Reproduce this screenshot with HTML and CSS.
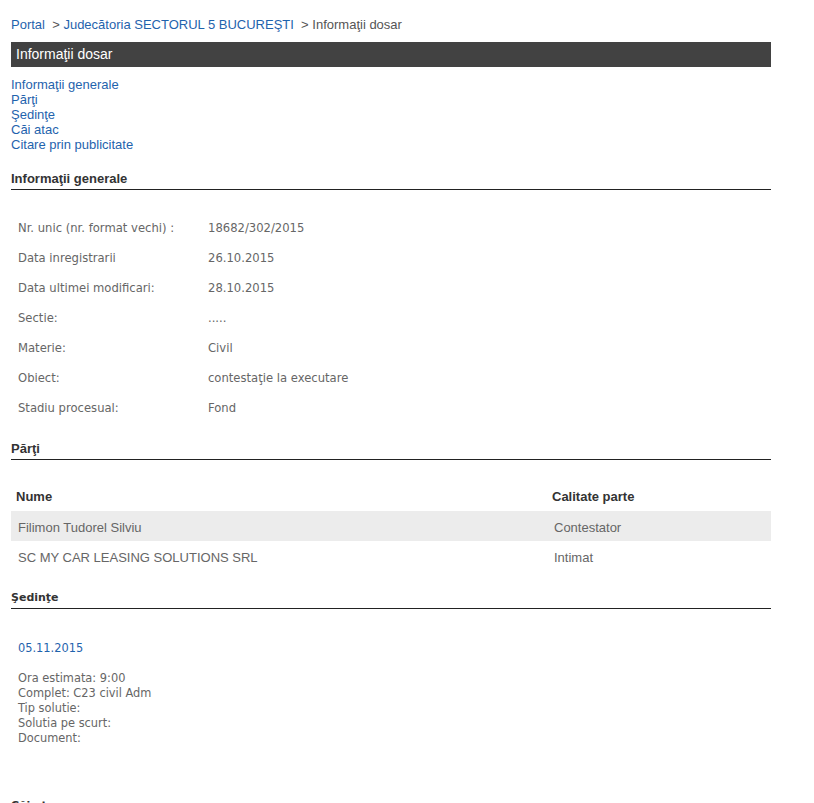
FILE: index.html
```html
<!DOCTYPE html>
<html lang="ro">
<head>
<meta charset="utf-8">
<title>Informaţii dosar</title>
<link rel="stylesheet" href="styles.css">
</head>
<body>
<div class="page">
  <div class="breadcrumb">
    <a href="#">Portal</a>&nbsp; &gt; <a href="#">Judecătoria SECTORUL 5 BUCUREŞTI</a>&nbsp; &gt; <span class="current">Informaţii dosar</span>
  </div>
  <div class="titlebar">Informaţii dosar</div>
  <ul class="nav">
    <li><a href="#">Informaţii generale</a></li>
    <li><a href="#">Părţi</a></li>
    <li><a href="#">Şedinţe</a></li>
    <li><a href="#">Căi atac</a></li>
    <li><a href="#">Citare prin publicitate</a></li>
  </ul>

  <h2 class="section-title">Informaţii generale</h2>
  <table class="info">
    <tr><td class="lbl">Nr. unic (nr. format vechi) :</td><td>18682/302/2015</td></tr>
    <tr><td class="lbl">Data inregistrarii</td><td>26.10.2015</td></tr>
    <tr><td class="lbl">Data ultimei modificari:</td><td>28.10.2015</td></tr>
    <tr><td class="lbl">Sectie:</td><td>.....</td></tr>
    <tr><td class="lbl">Materie:</td><td>Civil</td></tr>
    <tr><td class="lbl">Obiect:</td><td>contestaţie la executare</td></tr>
    <tr><td class="lbl">Stadiu procesual:</td><td>Fond</td></tr>
  </table>

  <h2 class="section-title after-info">Părţi</h2>
  <table class="parti">
    <thead>
      <tr><th class="c-nume">Nume</th><th>Calitate parte</th></tr>
    </thead>
    <tbody>
      <tr class="alt"><td>Filimon Tudorel Silviu</td><td>Contestator</td></tr>
      <tr><td>SC MY CAR LEASING SOLUTIONS SRL</td><td>Intimat</td></tr>
    </tbody>
  </table>

  <h2 class="section-title tahoma">Şedinţe</h2>
  <div class="sedinta">
    <a class="sedinta-date" href="#">05.11.2015</a>
    <div class="sedinta-info">
      Ora estimata: 9:00<br>
      Complet: C23 civil Adm<br>
      Tip solutie:<br>
      Solutia pe scurt:<br>
      Document:
    </div>
  </div>

  <h2 class="section-title tahoma">Căi atac</h2>
</div>
</body>
</html>
```
FILE: styles.css
```css
html, body {
  margin: 0;
  padding: 0;
  background: #fff;
}

body {
  font-family: "Liberation Sans", Arial, sans-serif;
  font-size: 13px;
  color: #555;
}

.page {
  width: 760px;
  padding: 0 0 0 11px;
}

a {
  color: #1f63ad;
  text-decoration: none;
}

.breadcrumb {
  padding-top: 16px;
  line-height: 17px;
  font-size: 13px;
  color: #555;
}

.breadcrumb .current {
  color: #555;
}

.titlebar {
  margin-top: 9px;
  height: 25px;
  line-height: 25px;
  background: #424242;
  color: #fff;
  font-size: 14px;
  padding-left: 5px;
}

.nav {
  list-style: none;
  margin: 10px 0 0 0;
  padding: 0;
  line-height: 15px;
  font-size: 13px;
}

.section-title {
  margin: 19px 0 0 0;
  font-size: 13px;
  line-height: 16px;
  font-weight: bold;
  color: #333;
  padding-bottom: 2px;
  border-bottom: 1px solid #222;
}

.section-title.after-info {
  margin-top: 18px;
}

.section-title.tahoma {
  font-family: "DejaVu Sans", Tahoma, sans-serif;
  font-size: 11px;
}

.info {
  margin-top: 23px;
  border-collapse: collapse;
  font-family: "DejaVu Sans", Tahoma, sans-serif;
  font-size: 11.6px;
  color: #666;
}

.info td {
  height: 30px;
  padding: 0 0 0 7px;
  vertical-align: middle;
}

.info td.lbl {
  width: 183px;
}

.parti {
  margin-top: 21px;
  width: 760px;
  border-collapse: collapse;
  font-size: 13px;
}

.parti th {
  height: 30px;
  text-align: left;
  font-size: 13px;
  font-weight: bold;
  color: #333;
  padding: 0 0 0 5px;
  vertical-align: middle;
}

.parti th.c-nume {
  width: 531px;
}

.parti td {
  height: 28px;
  padding: 2px 0 0 7px;
  color: #666;
  vertical-align: middle;
}

.parti tr.alt td {
  background: #ececec;
}

.sedinta {
  padding: 32px 0 0 7px;
  font-family: "DejaVu Sans", Tahoma, sans-serif;
  font-size: 11.4px;
  color: #666;
}

.sedinta-date {
  display: block;
  line-height: 15px;
  font-size: 11.4px;
}

.sedinta-info {
  margin-top: 15px;
  line-height: 15px;
}

.sedinta + .section-title {
  margin-top: 52px;
}
```
